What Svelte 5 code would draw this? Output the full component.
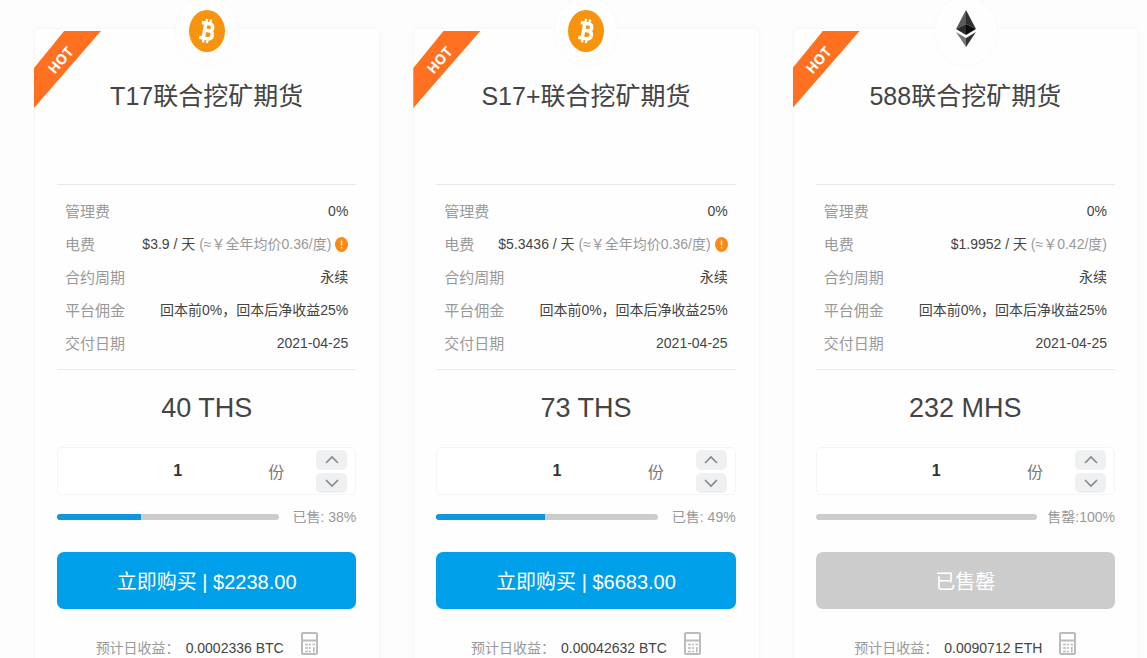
<script>
  let plans = [
    {
      id: 't17',
      coin: 'btc',
      name: 'T17联合挖矿期货',
      power: '$3.9 / 天',
      powerNote: '(≈￥全年均价0.36/度)',
      tip: true,
      hashrate: '40 THS',
      sold: 38,
      price: '$2238.00',
      income: '0.0002336 BTC',
      qty: 1
    },
    {
      id: 's17',
      coin: 'btc',
      name: 'S17+联合挖矿期货',
      power: '$5.3436 / 天',
      powerNote: '(≈￥全年均价0.36/度)',
      tip: true,
      hashrate: '73 THS',
      sold: 49,
      price: '$6683.00',
      income: '0.00042632 BTC',
      qty: 1
    },
    {
      id: 'm588',
      coin: 'eth',
      name: '588联合挖矿期货',
      power: '$1.9952 / 天',
      powerNote: '(≈￥0.42/度)',
      tip: false,
      hashrate: '232 MHS',
      sold: 100,
      price: '',
      income: '0.0090712 ETH',
      qty: 1
    }
  ]

  function step(i, delta) {
    plans[i].qty = Math.max(1, Number(plans[i].qty) + delta)
  }
</script>

<main class="plans">
  {#each plans as plan, i (plan.id)}
    <article class="card">
      <div class="coin">
        {#if plan.coin === 'btc'}
          <svg width="36" height="42" viewBox="0 0 36 42" aria-hidden="true">
            <ellipse cx="18" cy="21" rx="18" ry="21" fill="#f7930d" />
            <g transform="translate(18 21) rotate(10)" fill="none" stroke="#fff">
              <path d="M-2.500 -7.500V7.500M-6.500 -7.500H1.500Q5 -7.500 5 -4Q5 -.5 1.500 -.5H-2.500M1.500 -.5Q6 -.5 6 3.500Q6 7.500 1.500 7.500H-6.500" stroke-width="3.500" />
              <path d="M-2 -12V-8M2 -12V-8M-2 8V12M2 8V12" stroke-width="2.400" />
            </g>
          </svg>
        {:else}
          <svg width="20" height="42" viewBox="0 0 20 42" aria-hidden="true">
            <path d="M10 0 0 19 10 14Z" fill="#5a5a5a" />
            <path d="M10 0 20 19 10 14Z" fill="#303030" />
            <path d="M0 19 10 14V25Z" fill="#2b2b2b" />
            <path d="M20 19 10 14V25Z" fill="#0c0c0c" />
            <path d="M0 22 10 28V37Z" fill="#777" />
            <path d="M20 22 10 28V37Z" fill="#333" />
          </svg>
        {/if}
      </div>
      <div class="ribbon"><span>HOT</span></div>

      <h2 class="name">{plan.name}</h2>

      <dl class="specs">
        <div class="spec">
          <dt>管理费</dt>
          <dd>0%</dd>
        </div>
        <div class="spec">
          <dt>电费</dt>
          <dd class="power">
            <span>{plan.power} <span class="note">{plan.powerNote}</span></span>
            {#if plan.tip}
              <svg width="13" height="15" viewBox="0 0 13 15" aria-hidden="true">
                <ellipse cx="6.500" cy="7.500" rx="6.500" ry="7.500" fill="#f98a16" />
                <path d="M6.500 3.500V8.500M6.500 10V11.500" stroke="#ffe3c4" stroke-width="1.500" />
              </svg>
            {/if}
          </dd>
        </div>
        <div class="spec">
          <dt>合约周期</dt>
          <dd>永续</dd>
        </div>
        <div class="spec">
          <dt>平台佣金</dt>
          <dd>回本前0%，回本后净收益25%</dd>
        </div>
        <div class="spec">
          <dt>交付日期</dt>
          <dd>2021-04-25</dd>
        </div>
      </dl>

      <p class="hashrate">{plan.hashrate}</p>

      <div class="quantity">
        <input id="qty-{plan.id}" type="text" inputmode="numeric" bind:value={plan.qty} />
        <label for="qty-{plan.id}">份</label>
        <div class="stepper">
          <button type="button" aria-label="增加" on:click={() => step(i, 1)}>
            <svg width="14" height="10" viewBox="0 0 14 10"><path d="M1 8 7 2 13 8" stroke-width="1.600" /></svg>
          </button>
          <button type="button" aria-label="减少" on:click={() => step(i, -1)}>
            <svg width="14" height="10" viewBox="0 0 14 10"><path d="M1 2 7 8 13 2" stroke-width="1.600" /></svg>
          </button>
        </div>
      </div>

      <div class="sales">
        <div class="track" role="progressbar" aria-label="已售" aria-valuenow={plan.sold}>
          {#if plan.sold < 100}
            <div class="fill" style="width: {plan.sold}%"></div>
          {/if}
        </div>
        <span>{plan.sold < 100 ? `已售: ${plan.sold}%` : `售罄:${plan.sold}%`}</span>
      </div>

      <button class="buy" type="button" disabled={plan.sold >= 100}>
        {plan.sold < 100 ? `立即购买 | ${plan.price}` : '已售罄'}
      </button>

      <div class="income">
        <span>预计日收益：</span>
        <span class="amount">{plan.income}</span>
        <svg width="17" height="23" viewBox="0 0 17 23" aria-hidden="true">
          <rect x="1" y="1" width="15" height="21" rx="1" stroke-width="2" />
          <path d="M2 8.500H15" stroke-width="2" />
          <path d="M4 12.500H7M4 16H7M4 19.500H7M8 12.500H10M8 16H10M8 19.500H10" stroke-width="1.600" />
          <path d="M11.500 12.500H14M12.800 15V20.500" stroke-width="1.600" />
        </svg>
      </div>
    </article>
  {/each}
</main>

<style>
  :global(body) {
    margin: 0;
    background: #fdfdfd;
  }

  .plans {
    display: grid;
    grid-template-columns: repeat(3, minmax(0, 1fr));
    gap: 33px;
    padding: 28px 8px 0 34px;
    font-family: 'Liberation Sans', 'Noto Sans CJK SC', sans-serif;
    font-size: 14px;
    color: #444;
  }

  .card {
    position: relative;
    box-sizing: border-box;
    padding: 48px 23px 24px 22px;
    background: #fefefe;
    border: 1px solid #f8f8f8;
    border-radius: 4px;
    box-shadow: 0 0 8px rgba(0, 0, 0, 0.02);
  }

  .coin {
    position: absolute;
    top: -32px;
    left: 50%;
    display: flex;
    align-items: center;
    justify-content: center;
    width: 62px;
    height: 68px;
    margin-left: -31px;
    border-radius: 50%;
    background: #fefefe;
    box-shadow: 0 0 4px rgba(0, 0, 0, 0.03);
  }

  .ribbon {
    position: absolute;
    top: 2px;
    left: -1px;
    display: flex;
    align-items: center;
    justify-content: center;
    width: 67px;
    height: 77px;
    background: #ff7020;
    clip-path: polygon(45% 0, 100% 0, 0 100%, 0 48%);
  }

  .ribbon span {
    padding: 0 14px 18px 0;
    transform: rotate(-49deg);
    transform-origin: 14px 8px;
    color: #fff;
    font-family: 'Open Sans', sans-serif;
    font-size: 14px;
    font-weight: 700;
    line-height: 16px;
  }

  .name {
    margin: 0;
    height: 107px;
    font-size: 25px;
    font-weight: 400;
    line-height: 38px;
    text-align: center;
  }

  .specs {
    margin: 0;
    padding: 10px 8px 9px;
    border-top: 1px solid #e8e8e8;
    border-bottom: 1px solid #ececec;
  }

  .spec {
    display: flex;
    align-items: center;
    justify-content: space-between;
    line-height: 33px;
    white-space: nowrap;
  }

  .spec dt {
    color: #999;
    font-size: 15px;
  }

  .spec dd {
    margin: 0;
  }

  .power {
    display: flex;
    align-items: center;
    gap: 4px;
  }

  .note {
    color: #999;
  }

  .hashrate {
    margin: 19px 0 20px;
    font-size: 27px;
    line-height: 38px;
    text-align: center;
  }

  .quantity {
    display: flex;
    align-items: center;
    box-sizing: border-box;
    height: 48px;
    padding-right: 8px;
    background: #fff;
    border: 1px solid #f5f5f5;
    border-radius: 5px;
    font-size: 16px;
  }

  .quantity input {
    flex: 1;
    min-width: 0;
    padding: 0 0 0 29px;
    border: 0;
    outline: 0;
    background: none;
    color: #333;
    font: inherit;
    font-weight: 700;
    text-align: center;
  }

  .quantity label {
    margin-right: 32px;
    color: #777;
  }

  .stepper {
    display: flex;
    flex-direction: column;
    gap: 3px;
  }

  .stepper button {
    display: flex;
    align-items: center;
    justify-content: center;
    width: 31px;
    height: 20px;
    padding: 0;
    border: 0;
    border-radius: 5px;
    background: #eff0f1;
    cursor: pointer;
  }

  .stepper path {
    fill: none;
    stroke: #888;
  }

  .sales {
    display: flex;
    align-items: center;
    justify-content: space-between;
    height: 20px;
    margin: 12px 0 25px;
    color: #999;
    line-height: 20px;
    white-space: nowrap;
  }

  .track {
    width: 74%;
    height: 6px;
    overflow: hidden;
    border-radius: 3px;
    background: #ccc;
  }

  .fill {
    height: 100%;
    background: #1296db;
  }

  .buy {
    display: block;
    width: 100%;
    height: 57px;
    padding: 0;
    border: 0;
    border-radius: 7px;
    background: #009fe9;
    color: #fff;
    font: inherit;
    font-size: 20px;
    cursor: pointer;
  }

  .buy:disabled {
    background: #ccc;
    cursor: default;
  }

  .income {
    display: flex;
    justify-content: center;
    margin-top: 23px;
    color: #999;
    line-height: 32px;
    white-space: nowrap;
  }

  .amount {
    margin: 0 17px 0 6px;
    color: #444;
  }

  .income svg {
    fill: none;
    stroke: #bbb;
  }
</style>
